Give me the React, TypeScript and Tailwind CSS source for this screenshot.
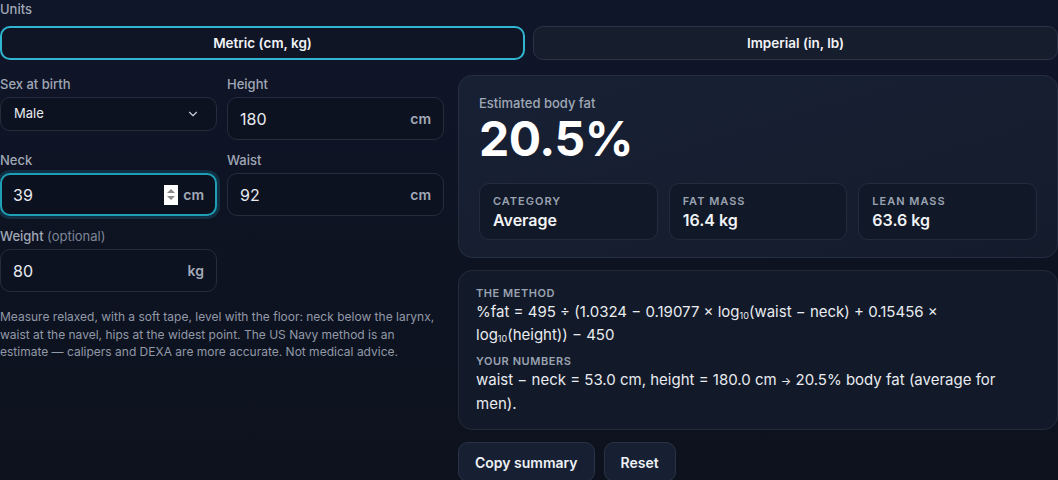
import { ChevronDown } from 'lucide-react'

const font = { fontFamily: 'Inter, "Noto Sans", sans-serif' }

function UnitInput({ value, unit, focused }: { value: string; unit: string; focused?: boolean }) {
  return (
    <div
      className={[
        'flex h-[43px] items-center rounded-[10px] px-[12px]',
        focused
          ? 'border-2 border-[#1e9fb5] bg-[#0c1120] pl-[11px] pr-[11px] shadow-[0_0_0_3px_rgba(34,180,210,0.18)]'
          : 'border border-[#252d3c] bg-[#0d1221]',
      ].join(' ')}
    >
      <span className="flex-1 text-[16px] text-[#e8ebf0]">{value}</span>
      {focused && (
        <span className="mr-[5px] flex h-[20px] w-[14px] flex-col items-center justify-center gap-[3px] bg-white">
          <span className="h-0 w-0 border-x-[4px] border-b-[4px] border-x-transparent border-b-[#8a8a8a]" />
          <span className="h-0 w-0 border-x-[4px] border-t-[4px] border-x-transparent border-t-[#8a8a8a]" />
        </span>
      )}
      <span className="text-[14px] font-semibold text-[#a3abb8]">{unit}</span>
    </div>
  )
}

function Field({ label, children }: { label: React.ReactNode; children: React.ReactNode }) {
  return (
    <div className="flex flex-col gap-[4px]">
      <span className="text-[13px] leading-[18px] font-medium text-[#a0a8b6]">{label}</span>
      {children}
    </div>
  )
}

function Stat({ label, value }: { label: string; value: string }) {
  return (
    <div className="flex h-[57px] flex-col justify-center rounded-[10px] border border-[#242c3c] bg-[#111827] px-[13px]">
      <span className="text-[11px] leading-[14px] font-semibold tracking-[0.09em] text-[#9aa3b2]">{label}</span>
      <span className="mt-[2px] text-[16px] leading-[20px] font-semibold text-[#f1f3f6]">{value}</span>
    </div>
  )
}

function Log() {
  return (
    <>
      log<sub className="text-[9px] leading-none align-baseline">10</sub>
    </>
  )
}

export default function App() {
  return (
    <div
      style={font}
      className="h-[480px] w-full overflow-hidden bg-gradient-to-b from-[#10162a] via-[#0e1322] to-[#0d121e] text-[#e8ebf0]"
    >
      {/* Units */}
      <div className="text-[13px] leading-[18px] font-medium text-[#a0a8b6]">Units</div>
      <div className="mt-[8px] grid grid-cols-2 gap-[8px]">
        <button className="h-[34px] rounded-[10px] border-2 border-[#30b6d1] bg-[#0f1525] text-[13.5px] font-semibold text-[#f1f3f6]">
          Metric (cm, kg)
        </button>
        <button className="h-[34px] rounded-[10px] border border-[#2a3244] bg-[#161d2d] text-[13.5px] font-semibold text-[#f1f3f6]">
          Imperial (in, lb)
        </button>
      </div>

      <div className="mt-[15px] flex gap-[14px]">
        {/* Inputs */}
        <div className="w-[444px] shrink-0">
          <div className="grid grid-cols-2 gap-x-[10px] gap-y-[11px]">
            <Field label="Sex at birth">
              <div className="flex h-[34px] items-center justify-between rounded-[10px] border border-[#252d3c] bg-[#0d1221] pl-[13px] pr-[16px]">
                <span className="text-[13px] text-[#e8ebf0]">Male</span>
                <ChevronDown size={14} strokeWidth={2} className="text-[#c8ced8]" />
              </div>
            </Field>
            <Field label="Height">
              <UnitInput value="180" unit="cm" />
            </Field>
            <Field label="Neck">
              <UnitInput value="39" unit="cm" focused />
            </Field>
            <Field label="Waist">
              <UnitInput value="92" unit="cm" />
            </Field>
            <Field
              label={
                <>
                  Weight <span className="font-normal text-[#7d8696]">(optional)</span>
                </>
              }
            >
              <UnitInput value="80" unit="kg" />
            </Field>
          </div>
          <p className="mt-[16px] text-[12px] leading-[17.5px] text-[#9199a7]">
            Measure relaxed, with a soft tape, level with the floor: neck below the larynx, waist at the navel, hips
            at the widest point. The US Navy method is an estimate — calipers and DEXA are more accurate. Not medical
            advice.
          </p>
        </div>

        {/* Results */}
        <div className="flex min-w-0 flex-1 flex-col">
          <div className="rounded-[14px] border border-[#252e40] bg-gradient-to-br from-[#182134] to-[#141c2c] px-[20px] pt-[18px] pb-[17px]">
            <div className="text-[13px] leading-[18px] font-medium text-[#a0a8b6]">Estimated body fat</div>
            <div className="mt-[1px] text-[48px] leading-[52px] font-bold tracking-[-0.01em] text-white">20.5%</div>
            <div className="mt-[18px] grid grid-cols-3 gap-[11px]">
              <Stat label="CATEGORY" value="Average" />
              <Stat label="FAT MASS" value="16.4 kg" />
              <Stat label="LEAN MASS" value="63.6 kg" />
            </div>
          </div>

          <div className="mt-[12px] rounded-[14px] border border-[#232b3b] bg-[#121928] pl-[17px] pr-[28px] pt-[15px] pb-[14px]">
            <div className="text-[11px] leading-[14px] font-semibold tracking-[0.05em] text-[#9aa3b2]">THE METHOD</div>
            <p className="mt-0 text-[15px] leading-[23px] text-[#e8ebf0]">
              %fat = 495 ÷ (1.0324 − 0.19077 × <Log />(waist − neck) + 0.15456 × <Log />(height)) − 450
            </p>
            <div className="mt-[8px] text-[11px] leading-[14px] font-semibold tracking-[0.05em] text-[#9aa3b2]">
              YOUR NUMBERS
            </div>
            <p className="mt-[1px] text-[15px] leading-[22.5px] text-[#e8ebf0]">
              waist − neck = 53.0 cm, height = 180.0 cm <span className="text-[11px]">→</span> 20.5% body fat
              (average for men).
            </p>
          </div>

          <div className="mt-[12px] flex gap-[9px]">
            <button className="h-[40px] rounded-[10px] border border-[#2a3344] bg-[#172033] px-[16px] text-[14px] font-semibold text-[#eef1f5]">
              Copy summary
            </button>
            <button className="h-[40px] rounded-[10px] border border-[#2a3344] bg-[#172033] px-[16px] text-[14px] font-semibold text-[#eef1f5]">
              Reset
            </button>
          </div>
        </div>
      </div>
    </div>
  )
}
